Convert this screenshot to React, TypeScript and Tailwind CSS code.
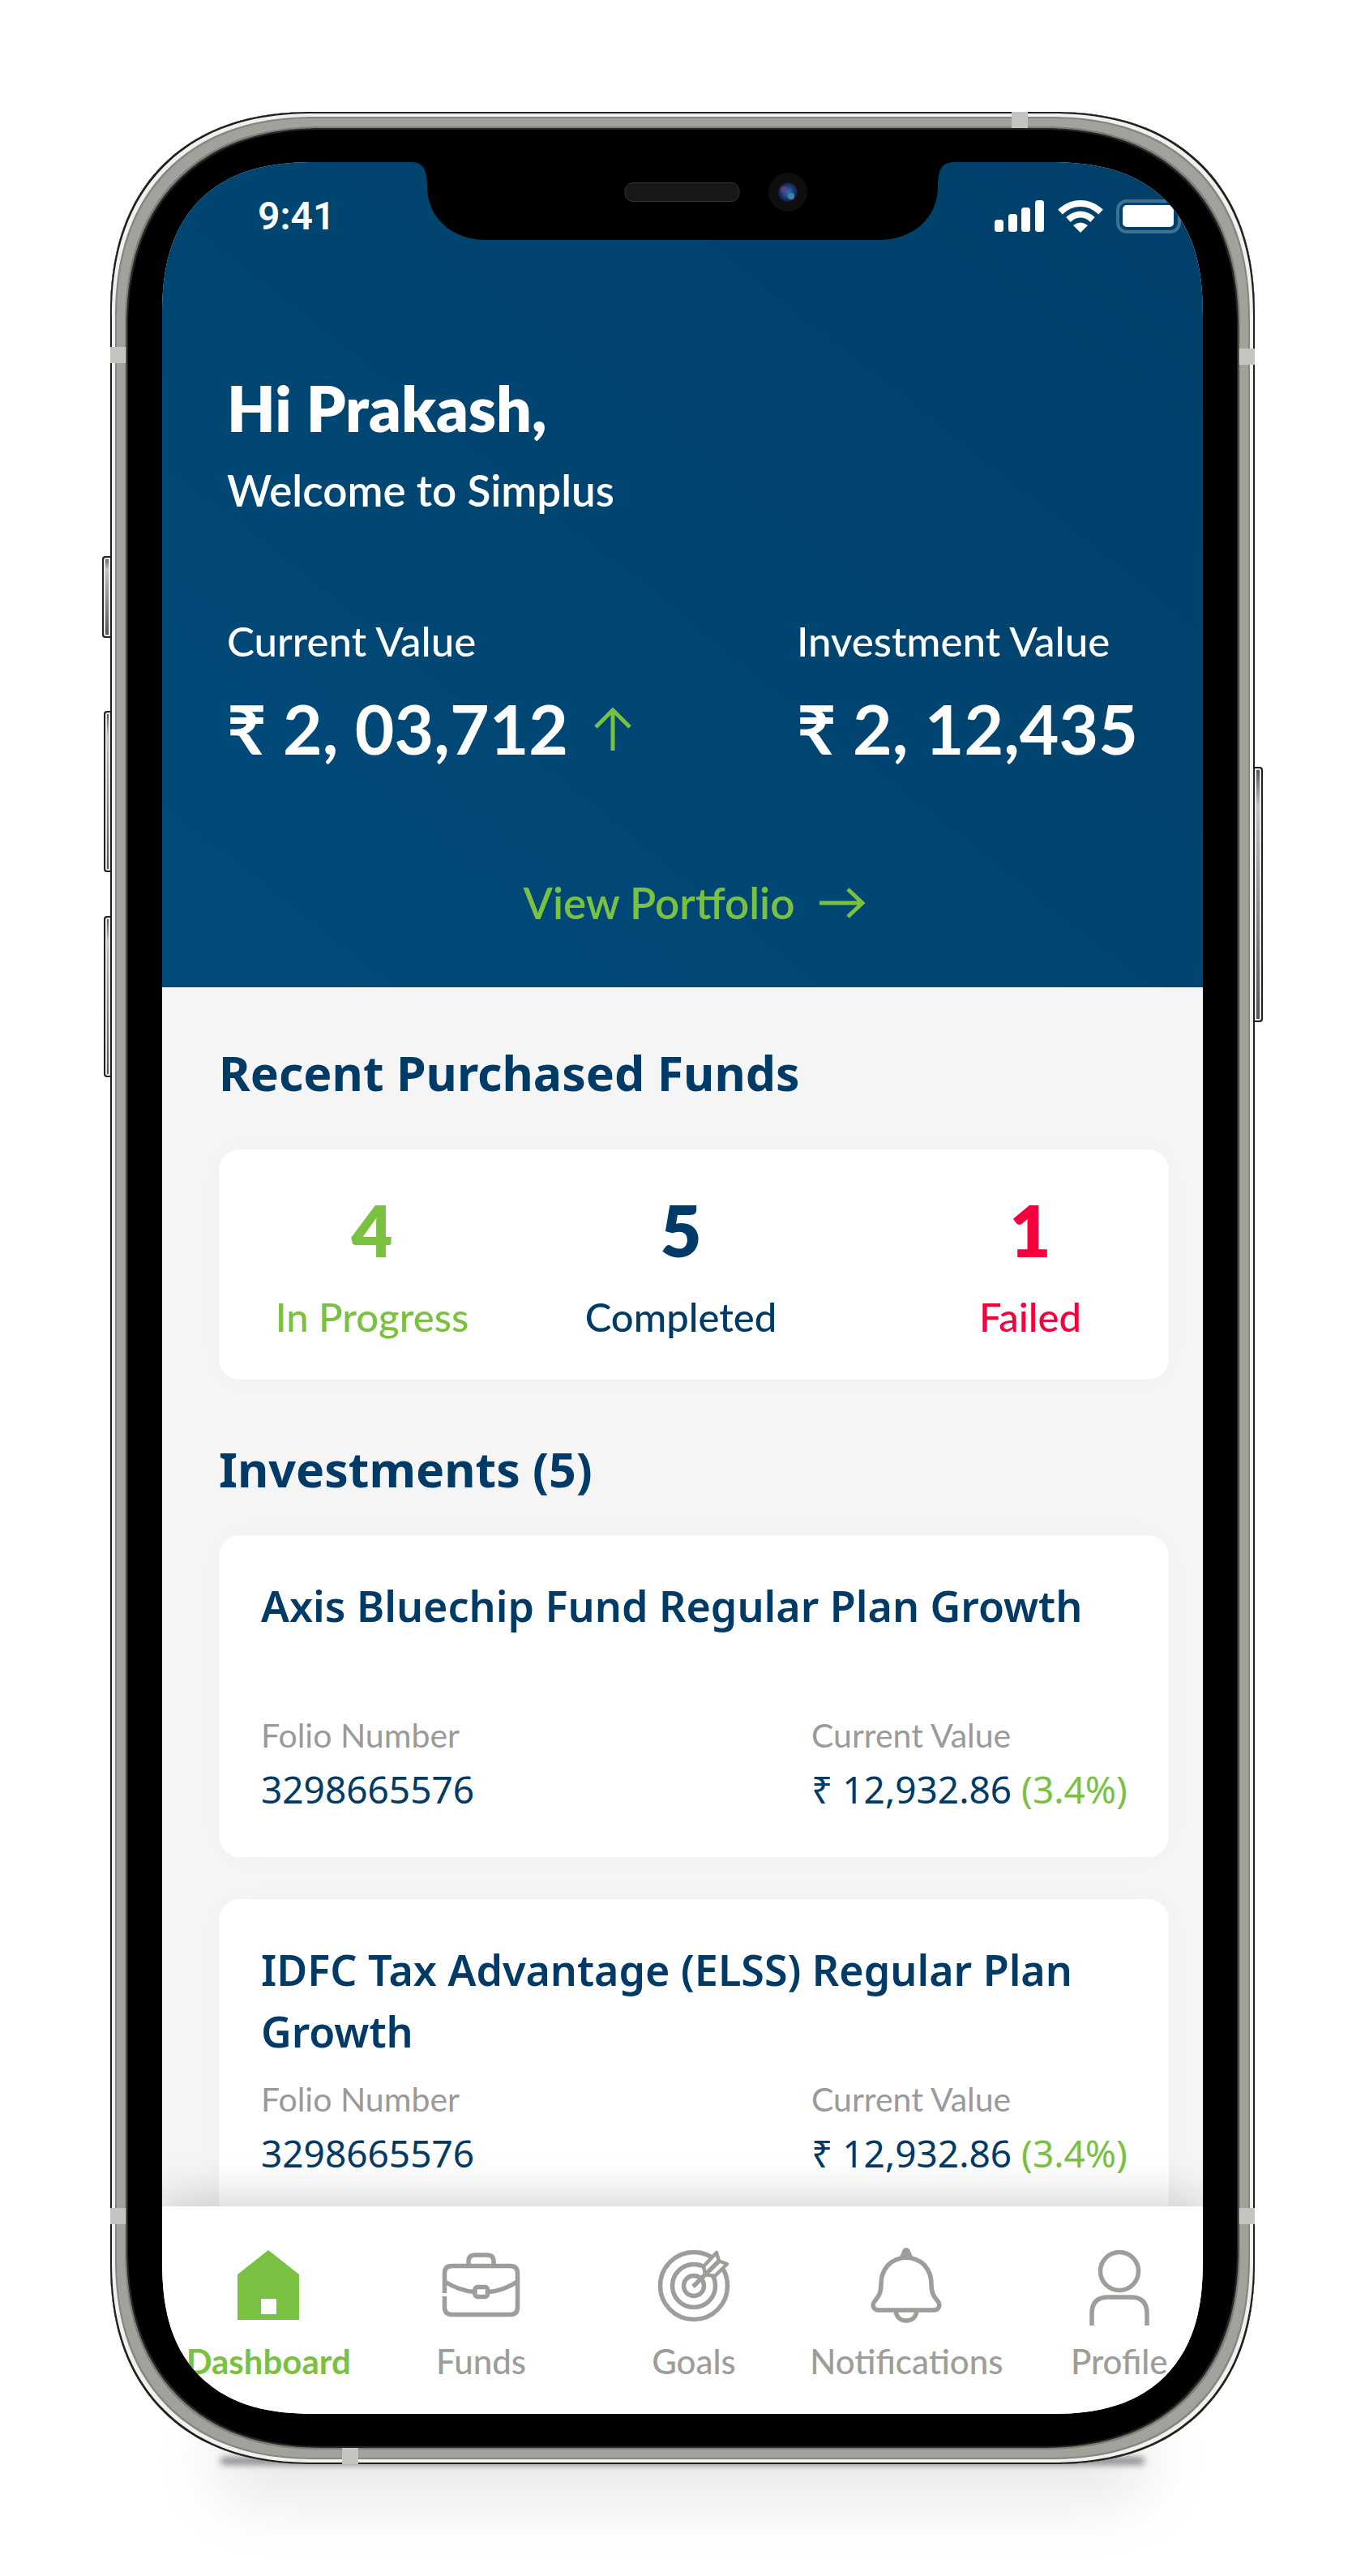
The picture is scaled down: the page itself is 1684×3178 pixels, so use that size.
import type { ReactNode } from "react";

const stats = [
  { count: 4, label: "In Progress", tone: "text-[#7ac142]", offset: "" },
  { count: 5, label: "Completed", tone: "text-[#003a66]", offset: "pr-17" },
  { count: 1, label: "Failed", tone: "text-[#f5003d]", offset: "" },
];

const investments = [
  { name: "Axis Bluechip Fund Regular Plan Growth", folio: "3298665576", value: "₹ 12,932.86", gain: "(3.4%)" },
  { name: "IDFC Tax Advantage (ELSS) Regular Plan Growth", folio: "3298665576", value: "₹ 12,932.86", gain: "(3.4%)" },
];

function LineIcon({ children }: { children: ReactNode }) {
  return (
    <svg viewBox="0 0 100 96" className="h-24 w-25 overflow-visible" fill="none" stroke="currentColor" strokeWidth="5.500" strokeLinejoin="round" aria-hidden="true">
      {children}
    </svg>
  );
}

const tabs = [
  {
    label: "Dashboard",
    icon: (
      <LineIcon>
        <path d="M50 4 88 34V90H12V34ZM41 64V83H60V64Z" fill="currentColor" fillRule="evenodd" stroke="none" />
      </LineIcon>
    ),
  },
  {
    label: "Funds",
    icon: (
      <LineIcon>
        <path d="M4.500 57V32.500q0-9 9-9H85.500q9 0 9 9V74.500q0 9-9 9H13.500q-9 0-9-9V61" />
        <path d="M34 23V18q0-8 8-8H57q8 0 8 8V23" />
        <path d="M5 43Q23 54 41 55.500M94 43Q77 54 59 55.500" />
        <rect x="42" y="49.500" width="15.500" height="12" rx="3" />
      </LineIcon>
    ),
  },
  {
    label: "Goals",
    icon: (
      <LineIcon>
        <circle cx="50" cy="48" r="41.500" />
        <circle cx="50" cy="48" r="26.500" />
        <circle cx="50" cy="48" r="12.500" />
        <path d="M64 34 62 24 78 7 81 17.500 91 21 76 36Z" fill="white" strokeWidth="4.500" />
        <path d="M49 49 81 17.500" />
      </LineIcon>
    ),
  },
  {
    label: "Notifications",
    icon: (
      <LineIcon>
        <path d="M50 13C31 14 19 27 19 46c0 11-3 15-8 21-4 5-1 11 5 11h68c6 0 9-6 5-11-5-6-8-10-8-21C81 27 69 14 50 13Z" />
        <path d="M43 14 47 4q3-3 6 0l4 10Z" fill="currentColor" strokeWidth="3" />
        <path d="M37 79c1 8 6 12 13 12s12-4 13-12" />
      </LineIcon>
    ),
  },
  {
    label: "Profile",
    icon: (
      <LineIcon>
        <circle cx="50" cy="30" r="23.500" />
        <path d="M16 97V82q0-20 20-20H64q20 0 20 20V97" />
      </LineIcon>
    ),
  },
];

function StatusBar() {
  return (
    <div className="flex h-[134px] items-center justify-between pl-[118px] pr-[27px] text-white">
      <span className="font-['Roboto',sans-serif] text-[48px] leading-[60px] font-semibold">9:41</span>
      <div className="flex items-center gap-4">
        <svg viewBox="0 0 62 40" className="h-10 w-[62px]" fill="white" aria-hidden="true">
          <rect x="0" y="24" width="11" height="15" rx="3.500" />
          <rect x="17" y="17" width="11" height="22" rx="3.500" />
          <rect x="33" y="9" width="11" height="30" rx="3.500" />
          <rect x="50" y="0" width="11" height="39" rx="3.500" />
        </svg>
        <svg viewBox="0 0 56 40" className="h-10 w-14" fill="none" stroke="white" strokeWidth="8" aria-hidden="true">
          <path d="M3 14.500Q14 4 28 4T53 14.500" />
          <path d="M13 24Q20 17.500 28 17.500T43 24" />
          <path d="M28 40 19 31Q28 24 37 31Z" fill="white" stroke="none" />
        </svg>
        <svg viewBox="0 0 80 42" className="h-[42px] w-20" aria-hidden="true">
          <rect x="2" y="2" width="76" height="38" rx="11" fill="none" stroke="white" strokeOpacity="0.250" strokeWidth="4" />
          <rect x="8" y="7" width="63" height="27" rx="5" fill="white" />
        </svg>
      </div>
    </div>
  );
}

function Notch() {
  return (
    <svg viewBox="0 0 670 96" className="absolute top-0 left-1/2 z-10 h-24 w-[670px] -translate-x-1/2" aria-hidden="true">
      <defs>
        <radialGradient id="lens">
          <stop offset="0" stopColor="#2f6fae" />
          <stop offset="0.500" stopColor="#1f4a80" />
          <stop offset="1" stopColor="#101c3c" />
        </radialGradient>
      </defs>
      <path d="M0 0C14 0 20 8 20 30C20 70 52 96 92 96H578C618 96 650 70 650 30C650 8 656 0 670 0Z" fill="black" />
      <rect x="264" y="25.500" width="141" height="23" rx="10" fill="#191817" stroke="#333" />
      <circle cx="465" cy="37" r="24" fill="#0e0e0f" />
      <circle cx="465" cy="37" r="12" fill="url(#lens)" />
      <circle cx="460" cy="34" r="4" fill="#5a3f8c" />
      <circle cx="469" cy="42" r="4" fill="#4183a8" />
    </svg>
  );
}

function Summary() {
  return (
    <header className="shrink-0 bg-linear-to-tr from-[#014b7d] via-[#004571] to-[#003f6a] text-white">
      <StatusBar />
      <div className="px-20 pt-[123px] pb-[72px]">
        <h1 className="text-[77px] leading-[92px] font-extrabold">Hi Prakash,</h1>
        <p className="mt-6 text-[53px] leading-[64px] font-semibold">Welcome to Simplus</p>
        <div className="mt-[122px] flex justify-between">
          <div>
            <p className="text-[51px] leading-[64px] font-medium">Current Value</p>
            <p className="mt-[26px] flex items-center gap-8 text-[84px] leading-[100px] font-bold">
              ₹ 2, 03,712
              <svg viewBox="0 0 46 54" className="h-[54px] w-[46px]" fill="none" stroke="#7ac142" strokeWidth="5" aria-hidden="true">
                <path d="M23 54V4M2 25 23 4 44 25" />
              </svg>
            </p>
          </div>
          <div>
            <p className="text-[51px] leading-[64px] font-medium">Investment Value</p>
            <p className="mt-[26px] text-[84px] leading-[100px] font-bold">₹ 2, 12,435</p>
          </div>
        </div>
        <div className="mt-[133px] flex justify-center pl-7">
          <a href="#portfolio" className="flex items-center gap-[30px] text-[53px] leading-[64px] font-semibold text-[#7ac142]">
            View Portfolio
            <svg viewBox="0 0 56 38" className="h-[38px] w-14" fill="none" stroke="currentColor" strokeWidth="5" aria-hidden="true">
              <path d="M0 19H53M35 2 53 19 35 36" />
            </svg>
          </a>
        </div>
      </div>
    </header>
  );
}

function SectionTitle({ children }: { children: ReactNode }) {
  return <h2 className="font-['Noto_Sans',sans-serif] text-[59px] leading-[72px] font-bold text-[#003a66]">{children}</h2>;
}

function InvestmentCard({ name, folio, value, gain }: (typeof investments)[number]) {
  return (
    <article className="rounded-[26px] bg-white pt-[49px] pr-[44px] pb-[54px] pl-[52px] shadow-[0_0_40px_rgba(0,0,0,0.02)]">
      <h3 className="min-h-[152px] font-['Noto_Sans',sans-serif] text-[52px] leading-[76px] font-semibold text-[#003a66]">{name}</h3>
      <dl className="mt-5 flex justify-between">
        <div>
          <dt className="text-[41px] leading-[52px] text-[#9a9a9a]">Folio Number</dt>
          <dd className="mt-2.5 font-['Noto_Sans',sans-serif] text-[46px] leading-[60px] text-[#003a66]">{folio}</dd>
        </div>
        <div className="w-[397px]">
          <dt className="text-[41px] leading-[52px] text-[#9a9a9a]">Current Value</dt>
          <dd className="mt-2.5 font-['Noto_Sans',sans-serif] text-[46px] leading-[60px] whitespace-nowrap text-[#003a66]">
            {value} <span className="text-[#7ac142]">{gain}</span>
          </dd>
        </div>
      </dl>
    </article>
  );
}

function TabBar() {
  return (
    <nav className="relative shrink-0 bg-white shadow-[0_-6px_56px_rgba(0,0,0,0.2)]">
      <div className="-mr-7 grid grid-cols-5 pt-[50px] pb-[40px]">
        {tabs.map(({ label, icon }, i) => (
          <button
            key={label}
            type="button"
            className={`flex flex-col items-center gap-5 text-[42px] leading-[50px] ${i === 0 ? "font-bold text-[#7ac142]" : "font-medium text-[#9d9d9a]"}`}
          >
            {icon}
            {label}
          </button>
        ))}
      </div>
    </nav>
  );
}

function SideKey({ place }: { place: string }) {
  return (
    <span
      className={`absolute border-2 border-[#222] bg-linear-to-b from-[#555] via-[#c4c2c2] via-15% to-[#555] shadow-[inset_0_0_0_2px_#e6e4e4] ${place}`}
    />
  );
}

export default function App() {
  return (
    <div className="min-h-screen bg-white px-34 py-[138px] font-['Lato',sans-serif]">
      <div className="relative isolate">
        <div className="absolute inset-x-[130px] -bottom-10 -z-10 h-24 rounded-full bg-black/10 blur-2xl" />
        <div className="absolute inset-x-[136px] bottom-0 -z-10 h-2 rounded-full bg-black/50 blur-[4px]" />
        <SideKey place="-left-2.5 top-[548px] h-[101px] w-3 rounded-l-sm" />
        <SideKey place="-left-2 top-[739px] h-[199px] w-2.5 rounded-l-sm" />
        <SideKey place="-left-2 top-[992px] h-[199px] w-2.5 rounded-l-sm" />
        <SideKey place="-right-2.5 top-[808px] h-[315px] w-3 rounded-r-sm" />

        <div className="relative rounded-[250px] bg-black px-16 py-[62px] [corner-shape:superellipse(1.2)] shadow-[inset_0_0_0_2px_#1f1f1f,inset_0_0_0_6px_#f1f0ee,inset_0_0_0_8px_#858880,inset_0_0_0_18px_#a0a39b,inset_0_0_0_20px_#7d8078,inset_0_0_0_22px_#262624]">
          <div className="relative flex aspect-[1284/2778] flex-col overflow-hidden rounded-[190px] bg-[#f5f5f5] [corner-shape:superellipse(1.3)]">
            <Notch />
            <Summary />
            <main className="min-h-0 flex-1 overflow-y-auto pt-[69px] pr-[42px] pl-[70px] [scrollbar-width:none]">
              <SectionTitle>Recent Purchased Funds</SectionTitle>
              <ul className="mt-[59px] grid grid-cols-[378fr_452fr_342fr] rounded-[26px] bg-white pt-[47px] pb-12 text-center shadow-[0_0_40px_rgba(0,0,0,0.02)]">
                {stats.map(({ count, label, tone, offset }) => (
                  <li key={label} className={`${tone} ${offset}`}>
                    <p className="text-[88px] leading-[104px] font-extrabold">{count}</p>
                    <p className="mt-[25px] text-[49px] leading-[60px] font-medium">{label}</p>
                  </li>
                ))}
              </ul>
              <div className="mt-[74px]">
                <SectionTitle>Investments (5)</SectionTitle>
              </div>
              <div className="mt-[46px] flex flex-col gap-[52px]">
                {investments.map((item) => (
                  <InvestmentCard key={item.name} {...item} />
                ))}
              </div>
            </main>
            <TabBar />
          </div>
          <span className="absolute top-[290px] left-0 h-5 w-[19px] bg-[#c4c4c0]" />
          <span className="absolute top-[292px] right-0 h-5 w-[19px] bg-[#c4c4c0]" />
          <span className="absolute bottom-[296px] left-0 h-5 w-[19px] bg-[#c4c4c0]" />
          <span className="absolute right-0 bottom-[296px] h-5 w-[19px] bg-[#c4c4c0]" />
          <span className="absolute top-0 right-[280px] h-5 w-5 bg-[#c4c4c0]" />
          <span className="absolute bottom-0 left-[286px] h-5 w-5 bg-[#c4c4c0]" />
        </div>
      </div>
    </div>
  );
}
